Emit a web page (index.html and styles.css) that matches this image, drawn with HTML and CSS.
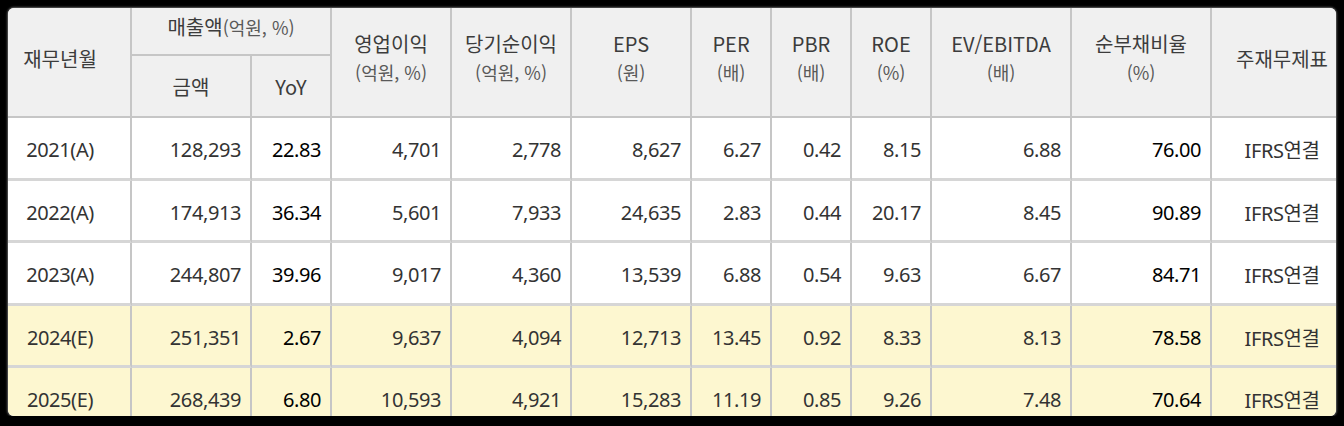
FILE: index.html
```html
<!DOCTYPE html>
<html lang="ko">
<head>
<meta charset="utf-8">
<title>재무 요약</title>
<link rel="stylesheet" href="styles.css">
</head>
<body>
<div class="frame">
  <table class="fin">
    <colgroup>
      <col class="c-date"><col class="c-120"><col class="c-80"><col class="c-120"><col class="c-120"><col class="c-120"><col class="c-80"><col class="c-80"><col class="c-80"><col class="c-140"><col class="c-140"><col class="c-140">
    </colgroup>
    <thead>
      <tr class="hr1">
        <th rowspan="2" class="h-single first">재무년월</th>
        <th colspan="2" class="h-group">매출액<span class="unit">(억원, %)</span></th>
        <th rowspan="2"><div class="h-main">영업이익</div><div class="h-unit">(억원, %)</div></th>
        <th rowspan="2"><div class="h-main">당기순이익</div><div class="h-unit">(억원, %)</div></th>
        <th rowspan="2"><div class="h-main">EPS</div><div class="h-unit">(원)</div></th>
        <th rowspan="2"><div class="h-main">PER</div><div class="h-unit">(배)</div></th>
        <th rowspan="2"><div class="h-main">PBR</div><div class="h-unit">(배)</div></th>
        <th rowspan="2"><div class="h-main">ROE</div><div class="h-unit">(%)</div></th>
        <th rowspan="2"><div class="h-main">EV/EBITDA</div><div class="h-unit">(배)</div></th>
        <th rowspan="2"><div class="h-main">순부채비율</div><div class="h-unit">(%)</div></th>
        <th rowspan="2" class="h-single last">주재무제표</th>
      </tr>
      <tr class="hr2">
        <th class="h-sub">금액</th>
        <th class="h-sub">YoY</th>
      </tr>
    </thead>
    <tbody>
      <tr>
        <td class="date">2021(A)</td><td>128,293</td><td class="dark">22.83</td><td>4,701</td><td>2,778</td><td>8,627</td><td>6.27</td><td>0.42</td><td>8.15</td><td>6.88</td><td class="dark">76.00</td><td class="std last">IFRS연결</td>
      </tr>
      <tr>
        <td class="date">2022(A)</td><td>174,913</td><td class="dark">36.34</td><td>5,601</td><td>7,933</td><td>24,635</td><td>2.83</td><td>0.44</td><td>20.17</td><td>8.45</td><td class="dark">90.89</td><td class="std last">IFRS연결</td>
      </tr>
      <tr>
        <td class="date">2023(A)</td><td>244,807</td><td class="dark">39.96</td><td>9,017</td><td>4,360</td><td>13,539</td><td>6.88</td><td>0.54</td><td>9.63</td><td>6.67</td><td class="dark">84.71</td><td class="std last">IFRS연결</td>
      </tr>
      <tr class="est">
        <td class="date">2024(E)</td><td>251,351</td><td class="dark">2.67</td><td>9,637</td><td>4,094</td><td>12,713</td><td>13.45</td><td>0.92</td><td>8.33</td><td>8.13</td><td class="dark">78.58</td><td class="std last">IFRS연결</td>
      </tr>
      <tr class="est">
        <td class="date">2025(E)</td><td>268,439</td><td class="dark">6.80</td><td>10,593</td><td>4,921</td><td>15,283</td><td>11.19</td><td>0.85</td><td>9.26</td><td>7.48</td><td class="dark">70.64</td><td class="std last">IFRS연결</td>
      </tr>
    </tbody>
  </table>
</div>
</body>
</html>
```

FILE: styles.css
```css
html, body {
  margin: 0;
  padding: 0;
  background: #000;
}

.frame {
  margin: 8px 0 0 8px;
  width: 1328px;
  height: 408px;
  overflow: hidden;
  border-radius: 6px;
  background: #fff;
  box-shadow: 0 0 2px 1px rgba(170, 170, 170, 0.55);
}

.fin {
  margin: -8px 0 0 -8px;
  width: 1352px;
  table-layout: fixed;
  border-collapse: separate;
  border-spacing: 0;
  font-family: "Noto Sans", "Noto Sans CJK KR", sans-serif;
}

.c-date { width: 132px; }
.c-120 { width: 120px; }
.c-80 { width: 80px; }
.c-140 { width: 140px; }

.fin th,
.fin td {
  padding: 0;
  border-right: 2px solid #c6c6c6;
  overflow: hidden;
  white-space: nowrap;
}

.fin th.last,
.fin td.last {
  border-right: none;
}

.fin th {
  background: #f0f0f0;
  font-family: "Noto Sans CJK KR", "Noto Sans", sans-serif;
  font-weight: 400;
  color: #3c3c3c;
  font-size: 20px;
  text-align: center;
  vertical-align: middle;
  border-bottom: 2px solid #c6c6c6;
}

.hr1 { height: 56px; }
.hr2 { height: 62px; }

.h-main {
  line-height: 28px;
}

.h-unit {
  line-height: 28px;
  font-size: 18px;
  color: #595959;
}

.h-single {
  padding-bottom: 4px;
}

.fin th.first {
  padding-right: 10px;
}

.h-group {
  line-height: 28px;
  padding-bottom: 4px;
}

.h-group .unit {
  font-size: 18px;
  color: #595959;
}

.h-sub {
  padding-top: 6px;
}

.fin tbody tr {
  height: 62.5px;
}

.fin td {
  background: #fff;
  font-size: 20px;
  color: #333;
  text-align: right;
  padding-right: 9px;
  padding-top: 4px;
  border-bottom: 3px solid #d6d6d6;
  letter-spacing: -0.4px;
}

.fin tr.est td {
  background: #fdf7d0;
}

.fin td.dark {
  color: #000;
}

.fin td.date {
  text-align: center;
  padding-right: 10px;
}

.fin td.std {
  text-align: center;
  padding-right: 0;
}
```
